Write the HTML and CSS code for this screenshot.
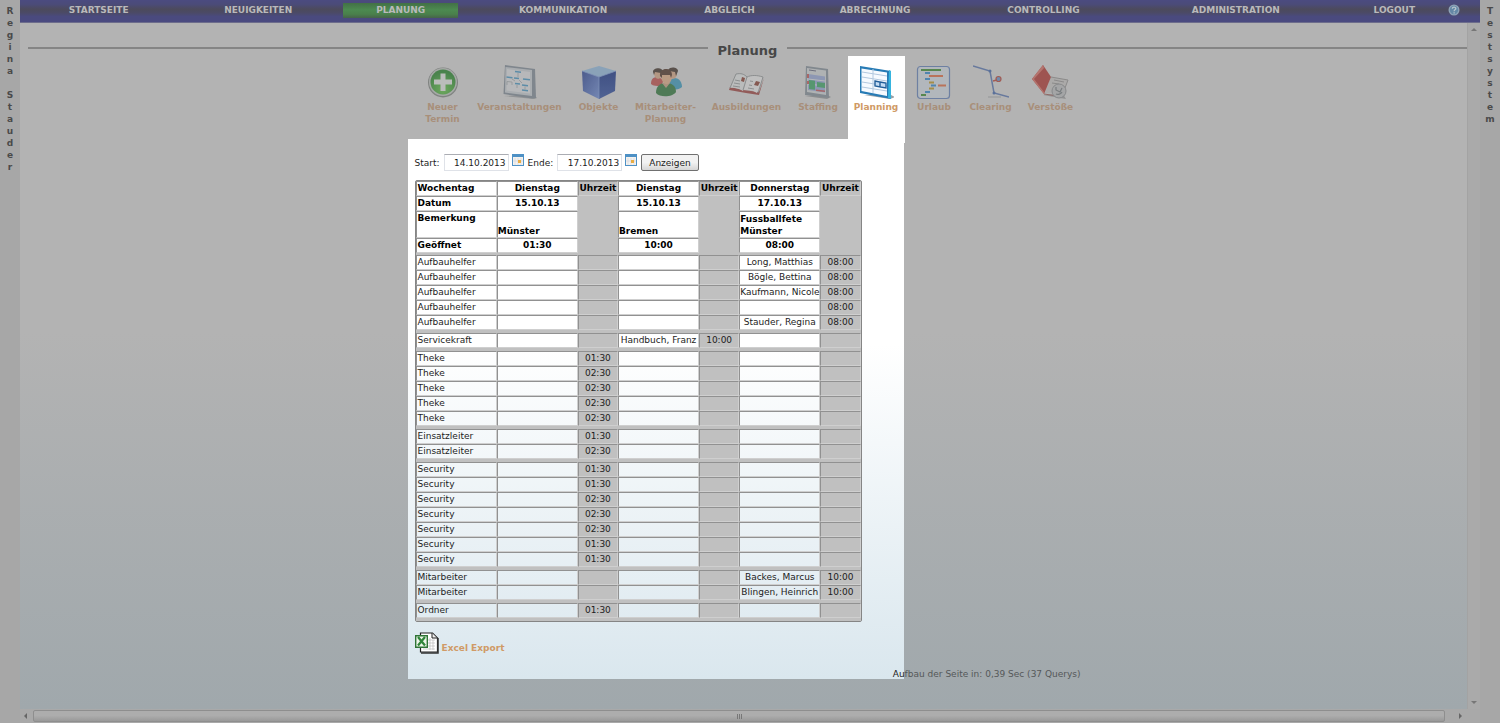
FILE: index.html
```html
<!DOCTYPE html>
<html lang="de">
<head>
<meta charset="utf-8">
<title>Planung</title>
<link rel="stylesheet" href="styles.css">
</head>
<body>
<div class="app">
<aside class="side">R<br>e<br>g<br>i<br>n<br>a<br><br>S<br>t<br>a<br>u<br>d<br>e<br>r</aside>
<div class="frame">
<nav class="nav">
<a href="#">STARTSEITE</a><a href="#">NEUIGKEITEN</a><a href="#" class="active">PLANUNG</a><a href="#">KOMMUNIKATION</a><a href="#">ABGLEICH</a><a href="#">ABRECHNUNG</a><a href="#">CONTROLLING</a><a href="#">ADMINISTRATION</a><a href="#">LOGOUT</a>
<a href="#" class="help" aria-label="Hilfe"><svg width="12" height="12" viewBox="0 0 12 12"><circle cx="6" cy="6" r="5.5" fill="#8fa3b8"/><circle cx="6" cy="6" r="4.2" fill="#6488a6"/><path d="M4.3 4.8c0-2.3 3.5-2.2 3.5-.2 0 1.3-1.7 1.2-1.7 2.6M6.1 8.2v1.2" fill="none" stroke="#b8c4cc" stroke-width="1.3"/></svg></a>
</nav>
<div class="view">
<main class="content">
<h1 class="title">Planung</h1>
<div class="toolbar">
<a href="#" class="tool"><svg width="36" height="36" viewBox="0 0 36 36"><defs><radialGradient id="gr" cx=".5" cy=".8" r=".7"><stop offset="0" stop-color="#62a84f"/><stop offset="1" stop-color="#377a3b"/></radialGradient></defs><circle cx="18" cy="17.500" r="15" fill="#777b78"/><circle cx="18" cy="17" r="14" fill="#a4a8a5"/><circle cx="18" cy="17" r="12.500" fill="url(#gr)"/><path d="M15.500 8.500h5v6h6.500v5h-6.500v6.500h-5v-6.500H9v-5h6.500z" fill="#bdbfbd"/></svg><span>Neuer<br>Termin</span></a>
<a href="#" class="tool"><svg width="36" height="36" viewBox="0 0 36 36"><path d="M2 31l30 3 3-1-3-3z" fill="#8c8e90"/><path d="M3 0l30 4 1 29-4 .5L1.500 29z" fill="#777f87"/><path d="M3.500 2l26.500 3v26L3 27.500z" fill="#a8acb0"/><path d="M5 4l23 3v21.500L4.500 25.500z" fill="#b8babc"/><path d="M13 6.500l6 .7M12 13l5 .6M21 14l7 .8M4.500 12l6 .7M13 18.500l5 .5M20 20l6 .7M20 25l6 .7" stroke="#4e86a6" stroke-width="1.500"/><path d="M16 8v4M10 14l3 2M17 15l3 3M23 21.500v3M5 20v-3.500l5 .5v3M15 23v-3" fill="none" stroke="#8b9093" stroke-width=".8"/></svg><span>Veranstaltungen</span></a>
<a href="#" class="tool"><svg width="36" height="36" viewBox="0 0 36 36"><defs><linearGradient id="c1" x2="1" y2="1"><stop stop-color="#3b4d86"/><stop offset="1" stop-color="#6a80b4"/></linearGradient><linearGradient id="c2" x2="0" y2="1"><stop stop-color="#2c3f7b"/><stop offset="1" stop-color="#40568f"/></linearGradient></defs><path d="M1 6L18 1l17 5-17 6z" fill="#83a0ba"/><path d="M1 6l17 6v22L2 26z" fill="url(#c1)"/><path d="M35 6l-17 6v22l16-8z" fill="url(#c2)"/><path d="M1 6l17 6 17-6M18 12v21" fill="none" stroke="#7189b5" stroke-width=".8"/></svg><span>Objekte</span></a>
<a href="#" class="tool"><svg width="36" height="36" viewBox="0 0 36 36"><path d="M3 19c0-6 3-7 7-7l6 3-3 6c-4 0-8 0-10-2z" fill="#a65351"/><path d="M21 15l5-2c6 0 8 5 8 9-3 3-8 3-12 1z" fill="#4589a3"/><path d="M6 9c0-6 8-7 8-1 0 7-7 8-8 1z" fill="#b4937b"/><path d="M5 7c0-5 10-5 10 0l-2 1-6-1-1 3z" fill="#4b413b"/><path d="M21 9c0-6 8-7 8-1 0 7-7 8-8 1z" fill="#b4937b"/><path d="M20 5c2-4 10-3 10 1l-2 5-1-4-6-1z" fill="#4b413b"/><path d="M8 28c0-7 4-10 10-10s10 3 10 9c-3 5-16 6-20 1z" fill="#3e7146"/><path d="M14 18h8l-4 5z" fill="#a88c77"/><path d="M13 12c0-7 11-7 11 0-1 9-9 10-11 0z" fill="#bb967b"/><path d="M12 11c-1-9 12-9 12-1l-1 3-1-3-8 0v3z" fill="#554138"/></svg><span>Mitarbeiter-<br>Planung</span></a>
<a href="#" class="tool"><svg width="36" height="36" viewBox="0 0 36 36"><path d="M0 25l1-3 13 3 16 2 5-14-5 17-13-2z" fill="#8d4c4a"/><path d="M1 23L7 9c5-1 8 0 11 3l-4 14c-4-3-9-4-13-3z" fill="#bcbebe"/><path d="M18 12c4-2 10-2 16 0l-6 16c-4-3-9-4-13-3z" fill="#c2c2c2"/><path d="M1 23L7 9c5-1 8 0 11 3 4-2 10-2 16 0l-5 16M18 12l-4 13M6 15l5 1M5 18l6 1M4 21l7 1M20 20l3 .5M19 23l6 1M21 16l3 .5" stroke="#777b7c" fill="none" stroke-width=".8"/><path d="M13 12l3 1-1 4-3-1zM27 16l4 1-2 4-4-1z" fill="#7d4a40"/></svg><span>Ausbildungen</span></a>
<a href="#" class="tool"><svg width="36" height="36" viewBox="0 0 36 36"><path d="M5 31l22 3 4-2-4-2z" fill="#858788"/><path d="M6 1l22 3 1 29-24-3z" fill="#798188"/><path d="M7 3l19 2.500v24.500L7 27z" fill="#afb2b4"/><path d="M9 5l7 1" stroke="#626474"/><path d="M8 9l17 2.500v16L8 25z" fill="#8793b3"/><path d="M8 14l17 2M8 19l17 2" stroke="#b7b9bd"/><path d="M9 15l6 .8v9L9 24zM17 17l8 1v5l-8-1z" fill="#479265"/><path d="M7 9h2v4H7zM7 16h2v3H7zM16 24.500l9 1v1.500l-9-1z" fill="#a65959"/></svg><span>Staffing</span></a>
<a href="#" class="tool current"><svg width="36" height="36" viewBox="0 0 36 36"><path d="M6 30l26 4 5-2-4-2z" fill="#9aa2a8"/><path d="M2 1l31 5v28L2 28z" fill="#277bb5"/><path d="M31 5l2 1v28l-3-1z" fill="#36b4df"/><path d="M3.500 3.500L29 7.500v23.500L3.500 26z" fill="#f6faff"/><path d="M4 7l25 4M4 12l25 4M4 17l25 4M4 22l25 4M15 4v24" stroke="#b2c8df" fill="none"/><path d="M17 16l5 1v5l-5-1zM22 17l6 1v5l-6-1z" fill="#c4dcf4" stroke="#225e99" stroke-width="1.400"/></svg><span>Planning</span></a>
<a href="#" class="tool"><svg width="36" height="36" viewBox="0 0 36 36"><rect x="1.500" y="1.500" width="32" height="32" rx="3" fill="#b2b8be" stroke="#6278a0" stroke-width="1.200"/><path d="M5 5h20" stroke="#47803e" stroke-width="2"/><path d="M9 8h5M9 14h5M15 20.500h5M9 27h5" stroke="#3f7eaf" stroke-width="2"/><path d="M13 11h14M22 20.500h8" stroke="#bb694b" stroke-width="2"/><path d="M13 17.500h5M13 23.500h5" stroke="#a28736" stroke-width="2"/><path d="M5 30h5" stroke="#47803e" stroke-width="2"/></svg><span>Urlaub</span></a>
<a href="#" class="tool"><svg width="36" height="36" viewBox="0 0 36 36"><path d="M15 32h13" stroke="#8f9193"/><path d="M0 1l17 5 4 22 15 4" fill="none" stroke="#5b709a" stroke-width="1.500"/><circle cx="17" cy="6" r="1.500" fill="#4c6696"/><circle cx="21" cy="28" r="1.500" fill="#4c6696"/><circle cx="25.500" cy="14" r="2.500" fill="#6585ac" stroke="#a04c43" stroke-width="1.200"/><path d="M20 16l4-1" stroke="#a04c43" stroke-width="1.500"/></svg><span>Clearing</span></a>
<a href="#" class="tool"><svg width="38" height="36" viewBox="0 0 38 36"><path d="M11 30l23 4-3-5z" fill="#8b8b8b"/><path d="M19 12l17 3-5 14-18-1z" fill="#aaa9a8"/><path d="M11 0l8 12-7 17L0 14z" fill="#9b4440"/><path d="M11 0l1 3L2 14l10 13v2L0 14z" fill="#b56b64"/><path d="M12 29l14 2" stroke="#8c5d59"/><path d="M19 12l17 3-3 8M22 15l10 2M20 18l7 1" stroke="#858483" fill="none"/><circle cx="27" cy="26" r="7" fill="#a2a3a4" stroke="#808284"/><path d="M24 22v3l4 2 2-4M24 29c2 1 5 0 6-2" fill="none" stroke="#6f7477" stroke-width="1.200"/></svg><span>Verstöße</span></a>
</div>
<div class="page">
<section class="panel">
<form class="filter">
<label for="start">Start:</label><input id="start" type="text" value="14.10.2013">
<svg width="12" height="13" viewBox="0 0 12 13"><path d="M0 0h12v12H0z" fill="#4e91c5"/><path d="M1 3h10v8H1z" fill="#f4f2ee"/><path d="M3 4v7M6 4v7M9 4v7M1 7h10" stroke="#d2d0dc" stroke-width=".6"/><path d="M6 6h3v3H6z" fill="#e9ad42"/></svg>
<label for="ende">Ende:</label><input id="ende" type="text" value="17.10.2013">
<svg width="12" height="13" viewBox="0 0 12 13"><path d="M0 0h12v12H0z" fill="#4e91c5"/><path d="M1 3h10v8H1z" fill="#f4f2ee"/><path d="M3 4v7M6 4v7M9 4v7M1 7h10" stroke="#d2d0dc" stroke-width=".6"/><path d="M6 6h3v3H6z" fill="#e9ad42"/></svg>
<button type="button">Anzeigen</button>
</form>
<table class="plan">
<colgroup><col class="day"><col class="day"><col class="time"><col class="day"><col class="time"><col class="day"><col class="time"></colgroup>
<thead>
<tr><th scope="row">Wochentag</th><th>Dienstag</th><th>Uhrzeit</th><th>Dienstag</th><th>Uhrzeit</th><th>Donnerstag</th><th>Uhrzeit</th></tr>
<tr><th scope="row">Datum</th><th>15.10.13</th><td class="fill" rowspan="3"></td><th>15.10.13</th><td class="fill" rowspan="3"></td><th>17.10.13</th><td class="fill" rowspan="3"></td></tr>
<tr class="note"><th scope="row">Bemerkung</th><th>Münster</th><th>Bremen</th><th>Fussballfete Münster</th></tr>
<tr><th scope="row">Geöffnet</th><th>01:30</th><th>10:00</th><th>08:00</th></tr>
<tr class="gap"><td colspan="7"></td></tr>
</thead>
<tbody>
<tr><td>Aufbauhelfer</td><td></td><td></td><td></td><td></td><td>Long, Matthias</td><td>08:00</td></tr>
<tr><td>Aufbauhelfer</td><td></td><td></td><td></td><td></td><td>Bögle, Bettina</td><td>08:00</td></tr>
<tr><td>Aufbauhelfer</td><td></td><td></td><td></td><td></td><td>Kaufmann, Nicole</td><td>08:00</td></tr>
<tr><td>Aufbauhelfer</td><td></td><td></td><td></td><td></td><td></td><td>08:00</td></tr>
<tr><td>Aufbauhelfer</td><td></td><td></td><td></td><td></td><td>Stauder, Regina</td><td>08:00</td></tr>
<tr class="gap"><td colspan="7"></td></tr>
</tbody>
<tbody>
<tr><td>Servicekraft</td><td></td><td></td><td>Handbuch, Franz</td><td>10:00</td><td></td><td></td></tr>
<tr class="gap"><td colspan="7"></td></tr>
</tbody>
<tbody>
<tr><td>Theke</td><td></td><td>01:30</td><td></td><td></td><td></td><td></td></tr>
<tr><td>Theke</td><td></td><td>02:30</td><td></td><td></td><td></td><td></td></tr>
<tr><td>Theke</td><td></td><td>02:30</td><td></td><td></td><td></td><td></td></tr>
<tr><td>Theke</td><td></td><td>02:30</td><td></td><td></td><td></td><td></td></tr>
<tr><td>Theke</td><td></td><td>02:30</td><td></td><td></td><td></td><td></td></tr>
<tr class="gap"><td colspan="7"></td></tr>
</tbody>
<tbody>
<tr><td>Einsatzleiter</td><td></td><td>01:30</td><td></td><td></td><td></td><td></td></tr>
<tr><td>Einsatzleiter</td><td></td><td>02:30</td><td></td><td></td><td></td><td></td></tr>
<tr class="gap"><td colspan="7"></td></tr>
</tbody>
<tbody>
<tr><td>Security</td><td></td><td>01:30</td><td></td><td></td><td></td><td></td></tr>
<tr><td>Security</td><td></td><td>01:30</td><td></td><td></td><td></td><td></td></tr>
<tr><td>Security</td><td></td><td>02:30</td><td></td><td></td><td></td><td></td></tr>
<tr><td>Security</td><td></td><td>02:30</td><td></td><td></td><td></td><td></td></tr>
<tr><td>Security</td><td></td><td>02:30</td><td></td><td></td><td></td><td></td></tr>
<tr><td>Security</td><td></td><td>01:30</td><td></td><td></td><td></td><td></td></tr>
<tr><td>Security</td><td></td><td>01:30</td><td></td><td></td><td></td><td></td></tr>
<tr class="gap"><td colspan="7"></td></tr>
</tbody>
<tbody>
<tr><td>Mitarbeiter</td><td></td><td></td><td></td><td></td><td>Backes, Marcus</td><td>10:00</td></tr>
<tr><td>Mitarbeiter</td><td></td><td></td><td></td><td></td><td>Blingen, Heinrich</td><td>10:00</td></tr>
<tr class="gap"><td colspan="7"></td></tr>
</tbody>
<tbody>
<tr><td>Ordner</td><td></td><td>01:30</td><td></td><td></td><td></td><td></td></tr>
<tr class="gap"><td colspan="7"></td></tr>
</tbody>
</table>
<a href="#" class="export"><svg width="24" height="22" viewBox="0 0 24 22"><path d="M5.500 1h12l5 5v14h-17z" fill="#fff" stroke="#222" stroke-width="1.200"/><path d="M23 6v15H6" fill="none" stroke="#333" stroke-width="1.500"/><path d="M17 1v5h5" fill="#eee" stroke="#222"/><path d="M13 8h7M13 11h7M13 14h7M8 17h12M15 6v12M18 8v10" stroke="#bbb" stroke-width=".7"/><path d="M.7 3.700h11.600v11.600H.7z" fill="#eef6ea" stroke="#2f7436" stroke-width="1.400"/><path d="M3 5l7 8.500M10 5l-7 8.500" stroke="#2f8438" stroke-width="2.200"/></svg><span>Excel Export</span></a>
</section>
<footer class="timing"><span>Au</span>fbau der Seite in: 0,39 Sec (37 Querys)</footer>
</div>
</main>
<div class="vbar"><i class="up"></i><i class="down"></i></div>
</div>
<div class="hbar"><i class="left"></i><div class="thumb"><i></i><i></i><i></i></div><i class="right"></i></div>
</div>
<aside class="side">T<br>e<br>s<br>t<br>s<br>y<br>s<br>t<br>e<br>m</aside>
</div>
</body>
</html>
```
FILE: styles.css
```css
* { box-sizing: border-box; }
body {
  margin: 0;
  background: #a7a7a7;
  color: #1c1c1c;
  font: 9px/12px Verdana, "DejaVu Sans", sans-serif;
}
a { text-decoration: none; }
svg { display: block; flex: none; }

.app {
  display: grid;
  grid-template-columns: 20px minmax(0, 1fr) 20px;
  min-height: 100vh;
}
.side {
  padding-top: 5px;
  background: #a7a7a7;
  color: #4a4a4a;
  font-weight: bold;
  text-align: center;
}
.frame { display: flex; flex-direction: column; }

.nav {
  display: grid;
  grid-template-columns: 158fr 162fr 123fr 204fr 130fr 162fr 176fr 210fr 108fr 10fr 20fr;
  align-items: start;
  height: 23px;
  padding-top: 3px;
  background: linear-gradient(#4b4b80, #4b4b78 20%, #4c4a5c 42%, #4b4a66 58%, #4a4a7e 75%, #4a4a80);
  border-bottom: 1px solid #6d6d8c;
}
.nav a {
  color: #b9b9bb;
  font-weight: bold;
  line-height: 15px;
  text-align: center;
}
.nav .active {
  margin: 0 3px 0 4px;
  background: linear-gradient(#427046, #4c8a50 45%, #4a804b 75%, #46634a);
}
.nav .help { display: flex; justify-content: center; padding-top: 1px; }

.view {
  flex: 1;
  display: grid;
  grid-template-columns: minmax(0, 1fr) 13px;
}
.content {
  padding: 20px 0 0 8px;
  background: linear-gradient(#b3b3b3 45%, #a0a8ac);
}
.title {
  display: flex;
  gap: 10px;
  margin: 0;
  color: #474747;
  font-size: 13px;
  line-height: 15px;
}
.title::before, .title::after {
  content: "";
  flex: 1;
  height: 2px;
  margin-top: 4px;
  background: #858585;
}

.toolbar {
  display: grid;
  grid-template-columns: 36px 86px 40px 62px 68px 43px 42px 41px 40px 48px;
  gap: 16px;
  justify-content: center;
  height: 83px;
  margin-top: -2px;
  padding-left: 4px;
}
.tool {
  display: flex;
  flex-direction: column;
  align-items: center;
  padding-top: 9px;
  color: #a88f7a;
  font-weight: bold;
  text-align: center;
  white-space: nowrap;
}
.tool svg { opacity: .85; }
.tool.current {
  z-index: 1;
  margin: 0 -7px -4px -8px;
  background: #fff;
  color: #d09a66;
}
.tool.current svg { opacity: 1; }

.page { width: 666px; margin: 0 auto; }
.panel {
  width: 496px;
  margin-left: -7px;
  padding: 15px 7px 25px;
  background: linear-gradient(#fff 38%, #dae7ee);
}
.filter {
  display: flex;
  align-items: center;
  gap: 3px;
  margin-bottom: 9px;
}
.filter label { margin-left: 1px; }
.filter label:first-child { margin-left: 0; }
.filter label + input { margin-left: 1px; }
.filter input {
  width: 65px;
  height: 17px;
  padding: 0 2px;
  border: 1px solid #dfe2e8;
  border-top-color: #abadb3;
  background: #fff;
  color: inherit;
  font: inherit;
  text-align: right;
}
.filter svg { margin-bottom: 4px; }
.filter button {
  height: 17px;
  margin-left: 1px;
  padding: 0 7px;
  border: 1px solid #707070;
  border-radius: 2px;
  background: linear-gradient(#f2f2f2 50%, #d6d6d6);
  color: inherit;
  font: inherit;
}

.plan {
  width: 447px;
  border: 1px solid #858585;
  border-radius: 2px;
  border-spacing: 0;
  table-layout: fixed;
}
.day { width: 81px; }
.time { width: 40px; }
.plan th, .plan td {
  height: 15px;
  padding: 0;
  border: 1px solid;
  border-color: #919191 #cfcfcf #cfcfcf #919191;
  line-height: 13px;
  text-align: center;
  white-space: nowrap;
}
.plan th { color: #000; }
.plan tr > :first-child { padding-left: 1px; text-align: left; }
.plan thead tr:first-child > :nth-child(odd):not(:first-child),
.plan tbody tr > :nth-child(odd):not(:first-child) { background: #c0c0c0; }
.plan .fill { border-color: #c0c0c0; background: #c0c0c0; }
.plan .note th {
  height: 27px;
  line-height: 12px;
  text-align: left;
  vertical-align: bottom;
  white-space: normal;
}
.plan .note > :first-child { vertical-align: top; }
.plan .gap td {
  height: 3px;
  padding: 0;
  border: 0;
  background: #c0c0c0;
}
.plan thead .gap td { height: 2px; }

.export {
  display: flex;
  align-items: flex-end;
  gap: 3px;
  margin-top: 10px;
  color: #d09a66;
  font-weight: bold;
}
.timing {
  position: relative;
  margin-top: -11px;
  color: #555859;
  text-align: right;
}
.timing span { color: #1c1c1c; }

.vbar {
  display: flex;
  flex-direction: column;
  justify-content: space-between;
  align-items: center;
  padding: 5px 0;
  background: #aaa;
  border-left: 1px solid #a3a3a3;
}
.hbar {
  display: flex;
  align-items: center;
  height: 14px;
  padding: 0 18px 0 4px;
  background: #a9a9a9;
}
.hbar .thumb {
  flex: 1;
  display: flex;
  justify-content: center;
  align-items: center;
  gap: 1px;
  height: 12px;
  margin: 0 14px 0 6px;
  border: 1px solid #8e8e8e;
  border-radius: 2px;
  background: linear-gradient(#adadad 45%, #999);
}
.thumb i { width: 1px; height: 5px; background: #777; }
.up, .down, .left, .right { border: 3px solid transparent; }
.up { border-top: 0; border-bottom-color: #777; }
.down { border-bottom: 0; border-top-color: #777; }
.left { border-left: 0; border-right-color: #666; }
.right { border-right: 0; border-left-color: #666; }
```
